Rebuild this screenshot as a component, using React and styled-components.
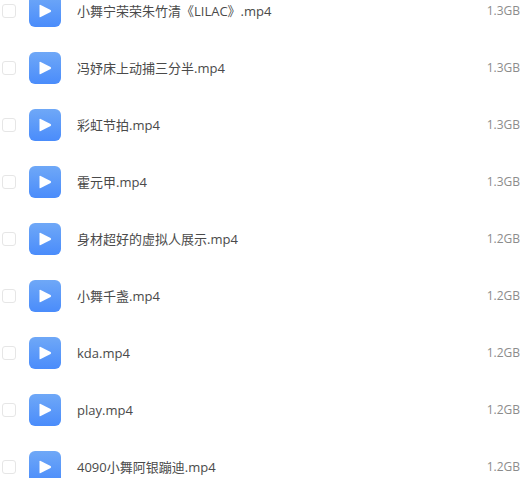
import React from 'react'
import styled, { createGlobalStyle } from 'styled-components'

const GlobalStyle = createGlobalStyle`
  html, body {
    margin: 0;
    padding: 0;
    height: 100%;
    overflow: hidden;
    background-color: #fff;
  }
`

const files = [
  { name: '小舞宁荣荣朱竹清《LILAC》.mp4', size: '1.3GB' },
  { name: '冯妤床上动捕三分半.mp4', size: '1.3GB' },
  { name: '彩虹节拍.mp4', size: '1.3GB' },
  { name: '霍元甲.mp4', size: '1.3GB' },
  { name: '身材超好的虚拟人展示.mp4', size: '1.2GB' },
  { name: '小舞千盏.mp4', size: '1.2GB' },
  { name: 'kda.mp4', size: '1.2GB' },
  { name: 'play.mp4', size: '1.2GB' },
  { name: '4090小舞阿银蹦迪.mp4', size: '1.2GB' },
]

function VideoIcon() {
  return (
    <IconBox>
      <svg width="14" height="14" viewBox="0 0 14 14">
        <path d="M1.5 1.6 Q1.5 0.4 2.7 0.9 L12.6 6 Q13.6 7 12.6 8 L2.7 13.1 Q1.5 13.6 1.5 12.4 Z" fill="#fff" />
      </svg>
    </IconBox>
  )
}

function App() {
  return (
    <Page>
      <GlobalStyle />
      <List>
        {files.map((item) => (
          <Row key={item.name}>
            <Check />
            <VideoIcon />
            <Name>{item.name}</Name>
            <Size>{item.size}</Size>
          </Row>
        ))}
      </List>
    </Page>
  )
}

export default App

const Page = styled.div`
  width: 527px;
  height: 478px;
  overflow: hidden;
  background-color: #fff;
  font-family: "Open Sans", "Noto Sans CJK SC", sans-serif;
`

const List = styled.div`
  display: flex;
  flex-direction: column;
  margin-top: -18px;
  padding: 0 7px 0 2px;
`

const Row = styled.div`
  display: flex;
  align-items: center;
  height: 57px;
  flex-shrink: 0;
`

const Check = styled.span`
  width: 14px;
  height: 14px;
  box-sizing: border-box;
  border: 1px solid #e6e6e6;
  border-radius: 3px;
  background-color: #fff;
  flex-shrink: 0;
`

const IconBox = styled.div`
  width: 32px;
  height: 32px;
  margin-left: 13px;
  border-radius: 6px;
  background: linear-gradient(180deg, #6fa8f7 0%, #4a8cfb 100%);
  display: flex;
  align-items: center;
  justify-content: center;
  flex-shrink: 0;
`

const Name = styled.div`
  flex: 1;
  margin-left: 16px;
  font-size: 13px;
  color: #4a4a4a;
  white-space: nowrap;
`

const Size = styled.div`
  font-size: 12px;
  color: #8c8c8c;
`
